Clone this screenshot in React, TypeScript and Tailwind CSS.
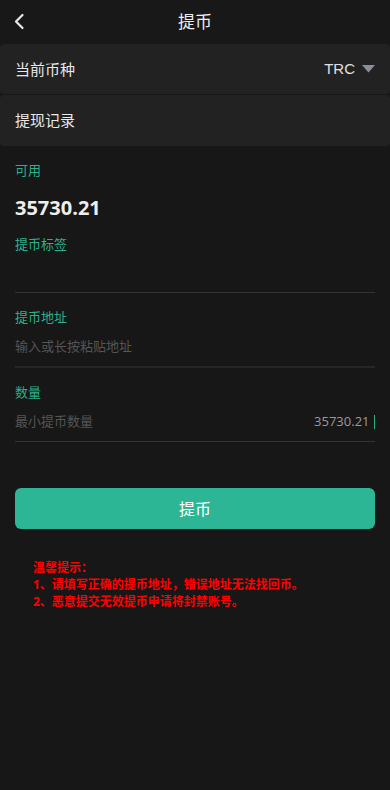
import React from "react";

const font = { fontFamily: '"Open Sans", "Noto Sans CJK SC", sans-serif' };

export default function App() {
  return (
    <div className="min-h-[790px] w-full bg-[#171717] text-[#e6e6e6]" style={font}>
      {/* header */}
      <div className="relative flex h-[44px] items-center justify-center bg-[#181818]">
        <svg className="absolute left-[13px] top-[13px]" width="12" height="17" viewBox="0 0 12 17" fill="none">
          <path d="M9.5 2 L3 8.5 L9.5 15" stroke="#e8e8e8" strokeWidth="2.2" strokeLinecap="round" strokeLinejoin="round" />
        </svg>
        <span className="text-[17px] text-[#eeeeee]">提币</span>
      </div>

      {/* rows */}
      <div className="flex h-[50px] items-center justify-between rounded-[4px] bg-[#222222] px-[15px]">
        <span className="text-[15px] text-[#e8e8e8]">当前币种</span>
        <div className="flex items-center gap-[7px]">
          <span className="text-[15px] text-[#e0e0e0]" style={{ fontFamily: '"Liberation Sans", sans-serif' }}>TRC</span>
          <svg width="13" height="8" viewBox="0 0 13 8">
            <path d="M0 0 H13 L6.5 7.5 Z" fill="#8a8f99" />
          </svg>
        </div>
      </div>
      <div className="mt-[1px] flex h-[51px] items-center rounded-[4px] bg-[#222222] px-[15px]">
        <span className="text-[15px] text-[#e8e8e8]">提现记录</span>
      </div>

      {/* form */}
      <div className="px-[15px] pt-[14px]">
        <div className="text-[13px] leading-[20px] text-[#2cb08c]">可用</div>
        <div className="mt-[16px] text-[20px] font-bold leading-[24px] text-[#eeeeee]">35730.21</div>
        <div className="mt-[14px] text-[13px] leading-[20px] text-[#2cb08c]">提币标签</div>
        <div className="h-[39px] border-b border-[#333333]"></div>

        <div className="mt-[14px] text-[13px] leading-[20px] text-[#2cb08c]">提币地址</div>
        <div className="flex h-[41px] items-center border-b-2 border-[#262626]">
          <span className="text-[13px] text-[#555555]">输入或长按粘贴地址</span>
        </div>

        <div className="mt-[14px] text-[13px] leading-[20px] text-[#2cb08c]">数量</div>
        <div className="flex h-[40px] items-center justify-between border-b border-[#333333]">
          <span className="text-[13px] text-[#555555]">最小提币数量</span>
          <span className="flex items-center gap-[4px] text-[13px] text-[#9a9a9a]">
            35730.21
            <span className="inline-block h-[14px] w-[1.5px] bg-[#2cb08c]"></span>
          </span>
        </div>

        <button className="mt-[46px] flex h-[41px] w-full items-center justify-center rounded-[6px] bg-[#2db696] text-[16px] text-white">
          提币
        </button>

        <div className="mt-[30px] px-[18px] text-[12px] font-bold leading-[17px] text-[#ff0000]">
          <div>温馨提示：</div>
          <div>1、请填写正确的提币地址，错误地址无法找回币。</div>
          <div>2、恶意提交无效提币申请将封禁账号。</div>
        </div>
      </div>
    </div>
  );
}
